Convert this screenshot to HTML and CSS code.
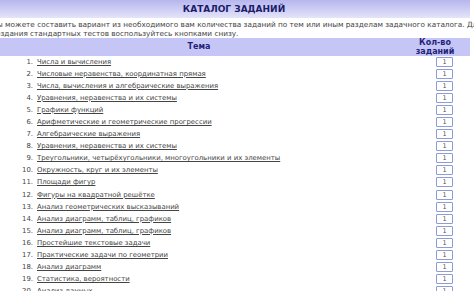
FILE: index.html
```html
<!DOCTYPE html>
<html lang="ru">

<head>
    <meta charset="UTF-8">
    <meta name="viewport" content="width=device-width, initial-scale=1.0">
    <title>Каталог заданий</title>
    <link rel="stylesheet" href="styles.css">
</head>

<body>
    <div class="catalog">
        <div class="title">КАТАЛОГ ЗАДАНИЙ</div>
        <p class="intro">Вы можете составить вариант из необходимого вам количества заданий по тем или иным разделам задачного каталога. Для<br>создания стандартных тестов воспользуйтесь кнопками снизу.</p>
        <table class="tasks">
            <thead>
                <tr>
                    <th class="topic-head">Тема</th>
                    <th class="count-head">Кол-во<br>заданий</th>
                </tr>
            </thead>
            <tbody>
                <tr><td><span class="num">1.</span><a href="#">Числа и вычисления</a></td><td class="count"><input class="amount" value="1"></td></tr>
                <tr><td><span class="num">2.</span><a href="#">Числовые неравенства, координатная прямая</a></td><td class="count"><input class="amount" value="1"></td></tr>
                <tr><td><span class="num">3.</span><a href="#">Числа, вычисления и алгебраические выражения</a></td><td class="count"><input class="amount" value="1"></td></tr>
                <tr><td><span class="num">4.</span><a href="#">Уравнения, неравенства и их системы</a></td><td class="count"><input class="amount" value="1"></td></tr>
                <tr><td><span class="num">5.</span><a href="#">Графики функций</a></td><td class="count"><input class="amount" value="1"></td></tr>
                <tr><td><span class="num">6.</span><a href="#">Арифметические и геометрические прогрессии</a></td><td class="count"><input class="amount" value="1"></td></tr>
                <tr><td><span class="num">7.</span><a href="#">Алгебраические выражения</a></td><td class="count"><input class="amount" value="1"></td></tr>
                <tr><td><span class="num">8.</span><a href="#">Уравнения, неравенства и их системы</a></td><td class="count"><input class="amount" value="1"></td></tr>
                <tr><td><span class="num">9.</span><a href="#">Треугольники, четырёхугольники, многоугольники и их элементы</a></td><td class="count"><input class="amount" value="1"></td></tr>
                <tr><td><span class="num">10.</span><a href="#">Окружность, круг и их элементы</a></td><td class="count"><input class="amount" value="1"></td></tr>
                <tr><td><span class="num">11.</span><a href="#">Площади фигур</a></td><td class="count"><input class="amount" value="1"></td></tr>
                <tr><td><span class="num">12.</span><a href="#">Фигуры на квадратной решётке</a></td><td class="count"><input class="amount" value="1"></td></tr>
                <tr><td><span class="num">13.</span><a href="#">Анализ геометрических высказываний</a></td><td class="count"><input class="amount" value="1"></td></tr>
                <tr><td><span class="num">14.</span><a href="#">Анализ диаграмм, таблиц, графиков</a></td><td class="count"><input class="amount" value="1"></td></tr>
                <tr><td><span class="num">15.</span><a href="#">Анализ диаграмм, таблиц, графиков</a></td><td class="count"><input class="amount" value="1"></td></tr>
                <tr><td><span class="num">16.</span><a href="#">Простейшие текстовые задачи</a></td><td class="count"><input class="amount" value="1"></td></tr>
                <tr><td><span class="num">17.</span><a href="#">Практические задачи по геометрии</a></td><td class="count"><input class="amount" value="1"></td></tr>
                <tr><td><span class="num">18.</span><a href="#">Анализ диаграмм</a></td><td class="count"><input class="amount" value="1"></td></tr>
                <tr><td><span class="num">19.</span><a href="#">Статистика, вероятности</a></td><td class="count"><input class="amount" value="1"></td></tr>
                <tr><td><span class="num">20.</span><a href="#">Анализ данных</a></td><td class="count"><input class="amount" value="1"></td></tr>
            </tbody>
        </table>
    </div>
</body>

</html>
```

FILE: styles.css
```css
body {
    margin: 0;
    overflow: hidden;
    background-color: white;
    font-family: "DejaVu Sans", Verdana, sans-serif;
}

.catalog {
    width: 472px;
    margin-left: -2px;
}

.title {
    height: 18px;
    line-height: 19px;
    text-align: center;
    font-size: 9px;
    font-weight: bold;
    color: #1c1c6a;
    background: linear-gradient(to bottom, #b6b6ee, #e4e4fa);
}

.intro {
    margin: 0 0 0 -6px;
    padding-top: 1.5px;
    font-size: 7.3px;
    line-height: 9px;
    color: #444;
    white-space: nowrap;
}

.tasks {
    width: 472px;
    border-collapse: collapse;
    border-spacing: 0;
    table-layout: fixed;
}

.tasks th {
    background-color: #c6c6f6;
    color: #1f1f7a;
    font-size: 8px;
    line-height: 9px;
    padding: 0;
    height: 18px;
}

.topic-head {
    width: 402px;
}

.count-head {
    width: 70px;
}

.tasks td {
    padding: 0;
    height: 12.1px;
    font-size: 6.9px;
    line-height: 12px;
    color: #444;
    white-space: nowrap;
}

.num {
    display: inline-block;
    width: 35px;
    margin-right: 4px;
    text-align: right;
}

.tasks a {
    color: #444;
}

.tasks .count {
    padding-left: 36px;
}

.amount {
    box-sizing: border-box;
    display: block;
    width: 17px;
    height: 10px;
    margin: 0;
    padding: 0;
    border: 1px solid #8d9bd6;
    border-radius: 1px;
    background-color: white;
    font-family: "DejaVu Sans", Verdana, sans-serif;
    font-size: 6.5px;
    line-height: 8px;
    text-align: center;
    color: #555;
}
```
